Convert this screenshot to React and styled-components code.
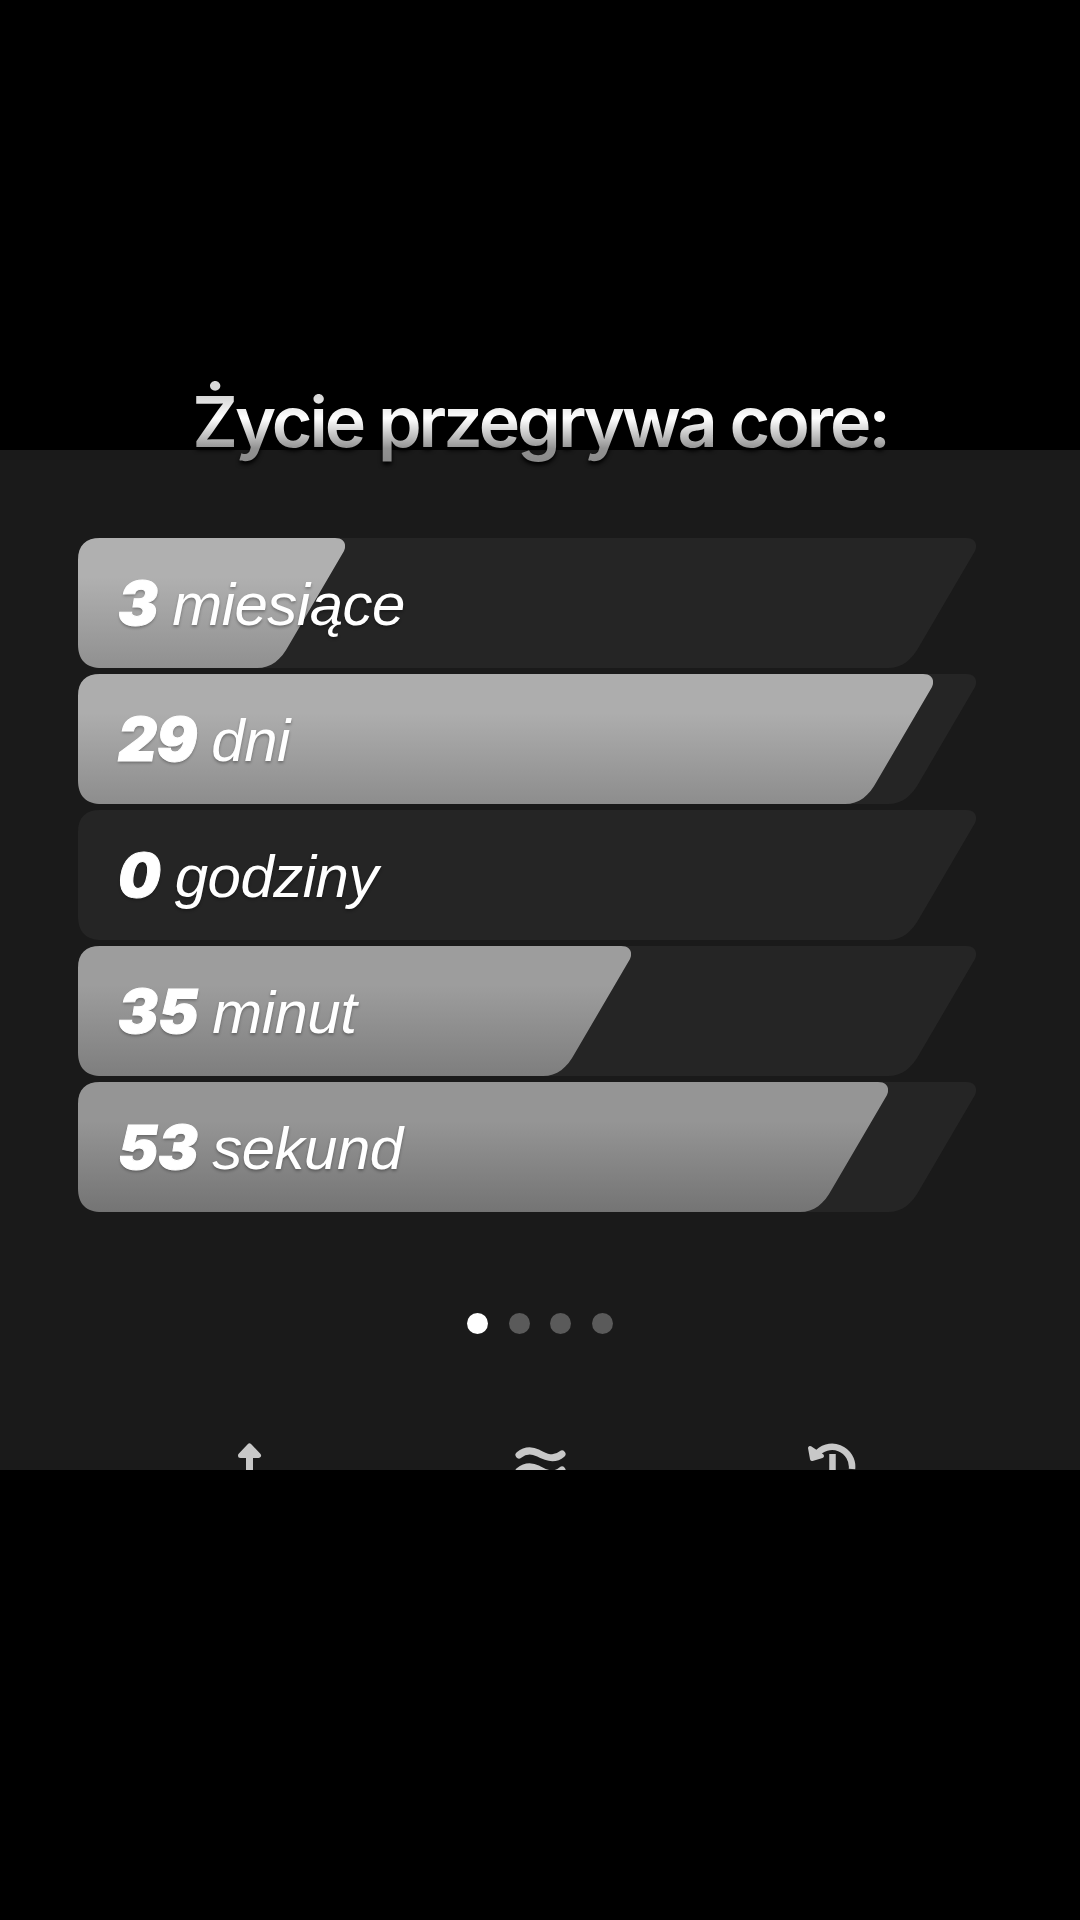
import React from "react";
import styled, { createGlobalStyle } from "styled-components";

const ROW_HEIGHT = 130;
const TRACK_WIDTH = 898;

const barShape = (w) => `path("M22 0 L${w - 10} 0 C${w - 1} 0 ${w + 2} 6 ${w - 1} 13 L${w - 56} 107 C${w - 64} 122 ${w - 74} 130 ${w - 88} 130 L24 130 C8 130 0 122 0 106 L0 22 C0 7 8 0 22 0 Z")`;

const rows = [
  { value: "3", unit: "miesiące", width: 267, from: "#b0b0b0", to: "#909090" },
  { value: "29", unit: "dni", width: 855, from: "#adadad", to: "#8d8d8d" },
  { value: "0", unit: "godziny", width: 0 },
  { value: "35", unit: "minut", width: 553, from: "#9d9d9d", to: "#7e7e7e" },
  { value: "53", unit: "sekund", width: 810, from: "#959595", to: "#747474" },
];

const GlobalStyle = createGlobalStyle`
  html, body {
    margin: 0;
    padding: 0;
    background: #000;
  }
`;

const Page = styled.div`
  width: 1080px;
  height: 1920px;
  padding-top: 362px;
  box-sizing: border-box;
  background: #000;
  font-family: "Liberation Sans", Arial, sans-serif;
  overflow: hidden;
`;

const Title = styled.h1`
  position: relative;
  z-index: 2;
  height: 120px;
  margin: 0 0 -32px;
  font-family: Inter, "Liberation Sans", sans-serif;
  font-size: 70px;
  font-weight: 600;
  line-height: 120px;
  letter-spacing: -3px;
  text-align: center;
  white-space: nowrap;
  color: transparent;
  background: linear-gradient(180deg, #d8d8d8 29%, #fff 47%, #929292 72%, #7e7e7e 100%);
  -webkit-background-clip: text;
  background-clip: text;
  filter: drop-shadow(0 3px 2px rgba(0, 0, 0, 1));
`;

const Panel = styled.section`
  height: 1020px;
  padding: 88px 104px 0 78px;
  box-sizing: border-box;
  background: #1a1a1a;
  overflow: hidden;
`;

const Bars = styled.div`
  display: flex;
  flex-direction: column;
  gap: 6px;
`;

const Track = styled.div`
  position: relative;
  width: ${TRACK_WIDTH}px;
  height: ${ROW_HEIGHT}px;
  display: flex;
  align-items: center;
  padding-left: 40px;
  box-sizing: border-box;
  &::before {
    content: "";
    position: absolute;
    inset: 0;
    background: #252525;
    clip-path: ${barShape(TRACK_WIDTH)};
  }
`;

const Fill = styled.div`
  position: absolute;
  left: 0;
  top: 0;
  height: ${ROW_HEIGHT}px;
  width: ${(p) => p.$w}px;
  background: linear-gradient(180deg, ${(p) => p.$from} 30%, ${(p) => p.$to} 100%);
  clip-path: ${(p) => barShape(p.$w)};
`;

const Label = styled.div`
  position: relative;
  display: flex;
  align-items: baseline;
  gap: 14px;
  color: #fff;
  font-size: 60px;
  font-style: italic;
  white-space: nowrap;
  text-shadow: 0 2px 3px rgba(0, 0, 0, 0.3);
`;

const Num = styled.span`
  font-family: Inter, "Liberation Sans", sans-serif;
  font-weight: 900;
  font-size: 60px;
  -webkit-text-stroke: 1px #fff;
`;

const Unit = styled.span`
  font-weight: 400;
  letter-spacing: -0.5px;
`;

const Dots = styled.div`
  display: flex;
  justify-content: center;
  gap: 20.6px;
  width: 924px;
  margin-top: 101px;
`;

const Dot = styled.span`
  width: 21px;
  height: 21px;
  border-radius: 50%;
  background: ${(p) => (p.$on ? "#fff" : "#5a5a5a")};
`;

const IconRow = styled.div`
  display: grid;
  grid-template-columns: repeat(3, 291px);
  justify-content: center;
  justify-items: center;
  width: 924px;
  margin-top: 109px;
  color: #c8c8c8;
`;

const UpIcon = () => (
  <svg width="60" height="60" viewBox="0 0 60 60" fill="none" stroke="currentColor">
    <path d="M30.5 8V60" strokeWidth="7" />
    <path d="M30.5 3L39.5 12.5H21.5Z" fill="currentColor" strokeWidth="5" strokeLinejoin="round" />
  </svg>
);

const WaveIcon = () => (
  <svg width="60" height="60" viewBox="0 0 60 60" fill="none" stroke="currentColor" strokeWidth="7" strokeLinecap="round">
    <path d="M9 12C15 7 22 7 28 10C35 14 44 18 52 11" />
    <path d="M9 28C15 23 22 23 28 26C35 30 44 34 52 27" />
  </svg>
);

const HistoryIcon = () => (
  <svg width="60" height="60" viewBox="0 0 60 60" fill="none" stroke="currentColor" strokeWidth="6.5">
    <path d="M15 12A20 20 0 0 1 51 26" />
    <path d="M9 5L11 16L21 13Z" fill="currentColor" strokeWidth="4" strokeLinejoin="round" />
    <path d="M31.5 11V40" />
  </svg>
);

const App = () => {
  return (
    <Page>
      <GlobalStyle />
      <Title>Życie przegrywa core:</Title>
      <Panel>
        <Bars>
          {rows.map((r) => (
            <Track key={r.unit}>
              {r.width > 0 && <Fill $w={r.width} $from={r.from} $to={r.to} />}
              <Label>
                <Num>{r.value}</Num>
                <Unit>{r.unit}</Unit>
              </Label>
            </Track>
          ))}
        </Bars>
        <Dots>
          <Dot $on />
          <Dot />
          <Dot />
          <Dot />
        </Dots>
        <IconRow>
          <UpIcon />
          <WaveIcon />
          <HistoryIcon />
        </IconRow>
      </Panel>
    </Page>
  );
};

export default App;
